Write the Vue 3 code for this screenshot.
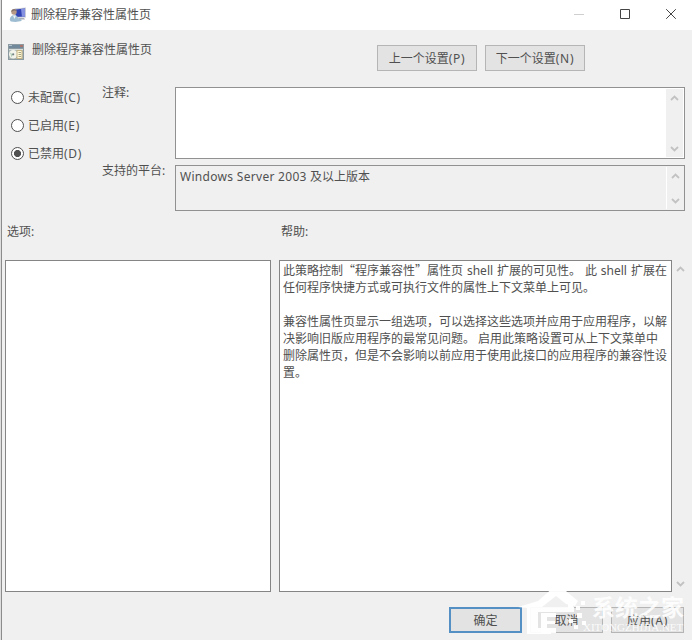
<script setup>
import { ref } from 'vue'

const state = ref('disabled')
const states = [
  { id: 'none', label: '未配置', key: '(C)' },
  { id: 'enabled', label: '已启用', key: '(E)' },
  { id: 'disabled', label: '已禁用', key: '(D)' },
]
const helpLines = [
  '任何程序快捷方式或可执行文件的属性上下文菜单上可见。',
  '',
  '兼容性属性页显示一组选项，可以选择这些选项并应用于应用程序，以解',
  '决影响旧版应用程序的最常见问题。 启用此策略设置可从上下文菜单中',
  '删除属性页，但是不会影响以前应用于使用此接口的应用程序的兼容性设',
  '置。',
]
</script>

<template>
  <div class="window">
    <header class="titlebar">
      <svg class="app-icon" width="18" height="16" viewBox="0 0 18 16">
        <path d="M5.500 1.500 17 .5v10l-11.500.5z" fill="#c9ccd6" />
        <path d="M6.500 2.500 16 1.500v8l-9.500.5z" fill="#3344b4" />
        <path d="M12 2 16 1.500v8l-3 .2z" fill="#8391e0" />
        <path d="M10 11h5l1 1.500H9z" fill="#a9adb8" />
        <circle cx="5" cy="5" r="2.700" fill="#b79a86" />
        <path d="M2.200 5C2 1.300 7.400 1 7.600 4L5 3.600z" fill="#83736a" />
        <path d="M.8 13c0-6 7.700-6.500 8.200-2l3.500 1.500v1.500l-6 1-4.700-.5z" fill="#9fbdd2" />
        <path d="M4 8.500 5.500 12 7 8.500z" fill="#edf4f8" />
      </svg>
      <span class="title">删除程序兼容性属性页</span>
      <div class="controls">
        <svg width="10" height="12" viewBox="0 0 10 12"><path d="M0 6.500h10" stroke="#cfcfcf" /></svg>
        <svg width="10" height="12" viewBox="0 0 10 12"><path d="M.5 1.500h9v9h-9z" fill="none" stroke="#444" /></svg>
        <svg width="10" height="12" viewBox="0 0 10 12"><path d="m.2 1.200 9.600 9.600m0-9.600L.2 10.800" stroke="#444" /></svg>
      </div>
    </header>

    <section class="heading">
      <svg class="policy-icon" width="16" height="16" viewBox="0 0 16 16">
        <path d="M0 0h16v16H0z" fill="#8b9aa0" />
        <path d="M1 1h14v3H1z" fill="#71899b" />
        <path d="M1 1h3v1H1z" fill="#b5c5cf" />
        <path d="M12 1h3v2h-3z" fill="#a8756e" />
        <path d="M1 5h14v1.500H1z" fill="#d8dfdc" />
        <path d="M1 6.500h14V15H1z" fill="#a9b5b0" />
        <circle cx="5.200" cy="10.300" r="4.200" fill="#f3f5ed" />
        <path d="M2 8.500 5 10.500 3.500 13.500z" fill="#b4d0bd" />
        <circle cx="5.200" cy="10.300" r="1.100" fill="#738384" />
        <path d="M9 6.500h5v8H9z" fill="#fff7d5" stroke="#c5b486" />
        <path d="M10.500 8.500H13M10.500 10.500H13M10.500 12.500H13" stroke="#a6a583" />
      </svg>
      <span class="subtitle">删除程序兼容性属性页</span>
      <div class="nav">
        <button class="btn wide">上一个设置<span class="key">(P)</span></button>
        <button class="btn wide">下一个设置<span class="key">(N)</span></button>
      </div>
    </section>

    <section class="config">
      <div class="radios">
        <label v-for="s in states" :key="s.id" class="radio" @click="state = s.id">
          <span class="dot" :class="{ on: state === s.id }"></span>
          <span>{{ s.label }}<span class="key">{{ s.key }}</span></span>
        </label>
      </div>
      <div class="fields">
        <span class="label">注释:</span>
        <div class="box comment">
          <div class="text"></div>
          <div class="scroll">
            <svg width="9" height="6" viewBox="0 0 9 6"><path d="m1 5 3.500-3.500L8 5" /></svg>
            <svg width="9" height="6" viewBox="0 0 9 6"><path d="m1 1 3.500 3.500L8 1" /></svg>
          </div>
        </div>
        <span class="label">支持的平台:</span>
        <div class="box platform">
          <div class="text"><span class="latin">Windows Server 2003</span> 及以上版本</div>
          <div class="scroll">
            <svg width="9" height="6" viewBox="0 0 9 6"><path d="m1 5 3.500-3.500L8 5" /></svg>
            <svg width="9" height="6" viewBox="0 0 9 6"><path d="m1 1 3.500 3.500L8 1" /></svg>
          </div>
        </div>
      </div>
    </section>

    <section class="captions">
      <span>选项:</span>
      <span>帮助:</span>
    </section>

    <section class="panels">
      <div class="panel"></div>
      <div class="panel help">
        <p class="spaced">此策略控制<span class="quoted">“程序兼容性”</span>属性页 shell 扩展的可见性。 此 shell 扩展在</p>
        <p v-for="(line, i) in helpLines" :key="i">{{ line }}</p>
      </div>
      <div class="scroll outer">
        <svg width="9" height="6" viewBox="0 0 9 6"><path d="m1 5 3.500-3.500L8 5" /></svg>
        <svg width="9" height="6" viewBox="0 0 9 6"><path d="m1 1 3.500 3.500L8 1" /></svg>
      </div>
    </section>

    <footer class="footer">
      <button class="btn primary">确定</button>
      <button class="btn">取消</button>
      <button class="btn">应用<span class="key">(A)</span></button>
    </footer>

    <div class="watermark">
      <svg width="70" height="50" viewBox="0 0 70 50">
        <path d="M0 21 20 15 37 0h8l3 5 12 10-3 5-9-2-10-8-14 11h32v5H20v16h13v6H9V22z" />
        <path d="M23 27h15v4h-9v4h8v3h-8v4h9v5H23z" />
        <path d="M50 17h5v5h-5zM58 20h4v4h-4zM63 15h4v4h-4zM59 27h5v5h-5zM51 33h4v4h-4zM64 35h4v4h-4zM56 39h4v4h-4z" />
      </svg>
      <div class="brand">
        <span class="name">系统之家</span>
        <span class="site">XITONGZHIJIA.NET</span>
      </div>
    </div>
  </div>
</template>

<style>
body {
  overflow: hidden;
}
</style>

<style scoped>
.window {
  position: relative;
  box-sizing: border-box;
  width: 692px;
  height: 640px;
  overflow: hidden;
  display: flex;
  flex-direction: column;
  padding-left: 2px;
  background: linear-gradient(90deg, #dedede 1px, #8c8c8c 1px 2px, #f0f0f0 2px);
  font: 12px/17px "Noto Sans", "Noto Sans CJK SC", sans-serif;
  color: #505050;
}
.titlebar {
  flex: none;
  height: 30px;
  display: flex;
  align-items: center;
  background: #fff;
  padding: 0 16px 0 7px;
}
.title {
  margin: -1px 0 0 4px;
}
.controls {
  margin-left: auto;
  display: flex;
  gap: 36px;
  padding-bottom: 2px;
}
.controls svg {
  display: block;
}
.heading {
  flex: none;
  height: 57px;
  display: flex;
  align-items: flex-start;
  padding-left: 6px;
}
.policy-icon {
  margin-top: 14px;
}
.subtitle {
  margin: 11px 0 0 8px;
}
.nav {
  display: flex;
  gap: 8px;
  margin: 15px 107px 0 auto;
}
.btn {
  box-sizing: border-box;
  width: 73px;
  height: 26px;
  padding: 0;
  border: 1px solid #b5b5b5;
  background: #e3e3e3;
  font: inherit;
  color: inherit;
}
.btn.wide {
  width: 100px;
}
.btn.primary {
  border: 2px solid #5590c5;
}
.key {
  letter-spacing: 0.7px;
}
.config {
  flex: none;
  height: 124px;
  display: flex;
}
.radios {
  width: 100px;
  padding: 2px 0 0 9px;
  box-sizing: border-box;
}
.radio {
  display: flex;
  align-items: center;
  gap: 4px;
  height: 17px;
  margin-bottom: 11px;
}
.dot {
  box-sizing: border-box;
  width: 13px;
  height: 13px;
  border: 1px solid #505050;
  border-radius: 50%;
  background: #fff;
}
.dot.on {
  background: radial-gradient(circle, #505050 3.2px, #fff 3.9px);
}
.fields {
  display: grid;
  grid-template-columns: 73px 510px;
  grid-template-rows: 72px 46px;
  row-gap: 6px;
}
.label {
  margin-top: -3px;
}
.box {
  box-sizing: border-box;
  display: flex;
  border: 1px solid #919191;
}
.comment {
  background: #fff;
}
.text {
  flex: 1;
  padding: 2px 4px;
  white-space: pre;
}
.latin {
  letter-spacing: 0.3px;
}
.scroll {
  flex: none;
  box-sizing: border-box;
  width: 17px;
  margin: 1px;
  padding: 6px 0 5px;
  background: #f0f0f0;
  display: flex;
  flex-direction: column;
  align-items: center;
  justify-content: space-between;
}
.platform .scroll {
  border-left: 1px solid #fff;
}
.scroll path {
  fill: none;
  stroke: #c2c2c2;
  stroke-width: 1.8;
}
.captions {
  flex: none;
  height: 49px;
  display: grid;
  grid-template-columns: 274px 1fr;
  padding: 12px 0 0 5px;
  box-sizing: border-box;
}
.panels {
  flex: none;
  height: 332px;
  display: grid;
  grid-template-columns: 266px 393px 17px;
  column-gap: 8px;
  padding-left: 3px;
}
.panel {
  box-sizing: border-box;
  border: 1px solid #858585;
  background: #fff;
}
.help {
  padding: 1px 0 0 3px;
}
.help p {
  margin: 0;
  height: 17px;
  white-space: pre;
}
.spaced {
  word-spacing: 0.8px;
}
.quoted {
  font-family: "Noto Sans CJK SC", sans-serif;
  line-height: 1;
}
.scroll.outer {
  margin: 0 0 0 -8px;
  padding: 6px 0 5px;
}
.footer {
  display: flex;
  gap: 8px;
  padding: 15px 0 0 447px;
}
.watermark {
  position: absolute;
  left: 518px;
  top: 586px;
  display: flex;
  color: rgba(255, 255, 255, 0.88);
}
.watermark svg {
  fill: rgba(255, 255, 255, 0.95);
}
.brand {
  display: flex;
  flex-direction: column;
  margin-left: -5px;
}
.name {
  margin-left: 9px;
  padding-top: 7px;
  font: bold 23px/26px "Noto Sans CJK SC", sans-serif;
  white-space: nowrap;
}
.site {
  margin-top: 2px;
  font: 11px/12px "Liberation Serif", serif;
  white-space: nowrap;
}
</style>
